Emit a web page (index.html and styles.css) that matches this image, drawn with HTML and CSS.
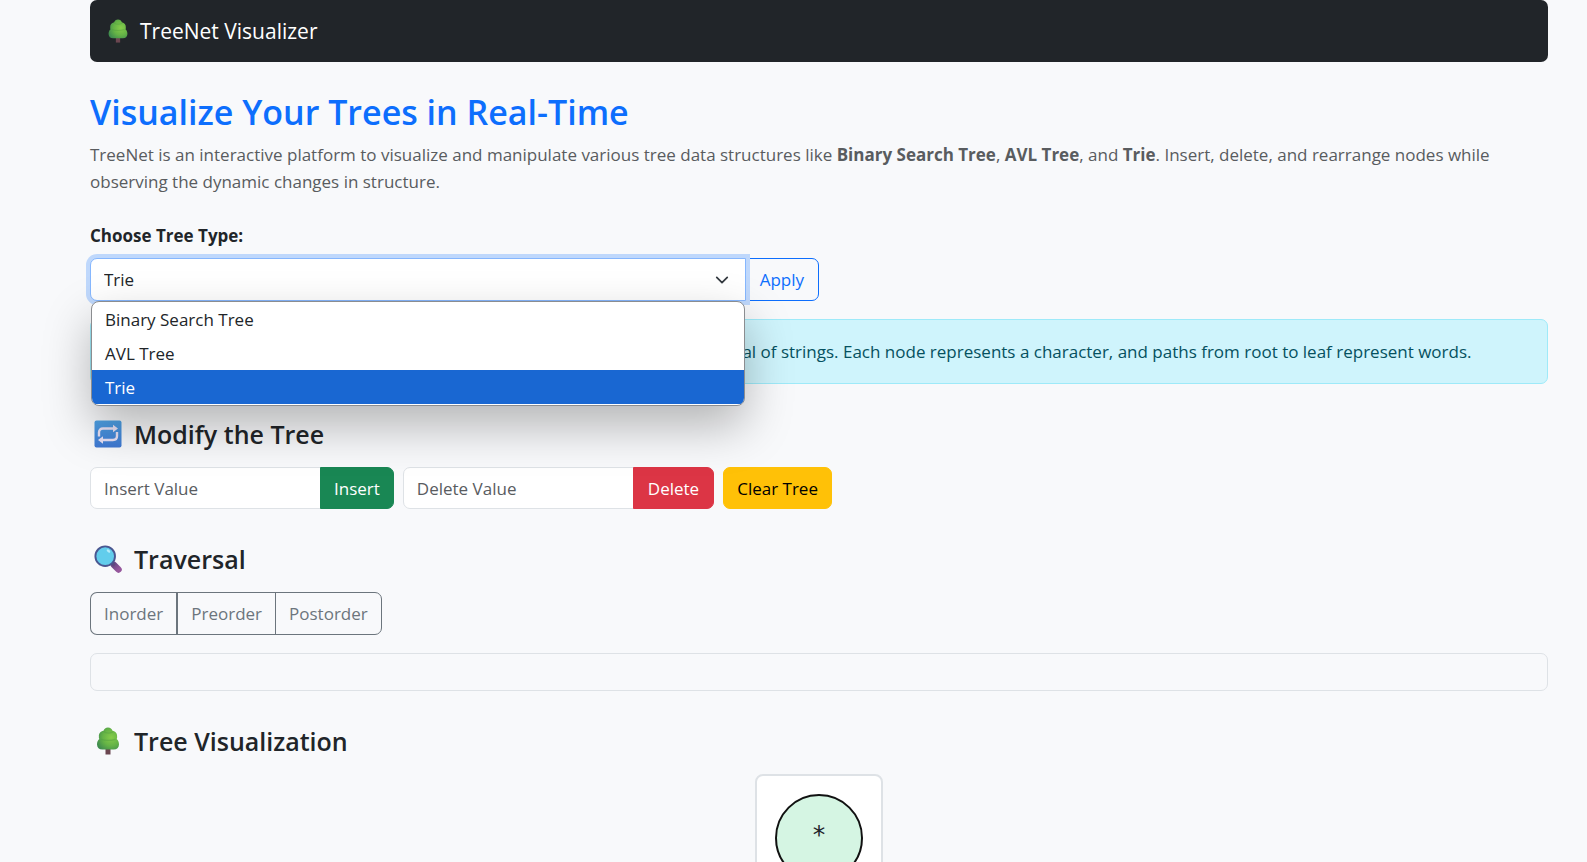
FILE: index.html
```html
<!DOCTYPE html>
<html lang="en">
<head>
<meta charset="utf-8">
<meta name="viewport" content="width=device-width, initial-scale=1">
<title>TreeNet Visualizer</title>
<link rel="stylesheet" href="styles.css">
</head>
<body>
<svg class="defs" aria-hidden="true">
  <defs>
    <radialGradient id="leaf" cx="0.65" cy="0.45" r="0.7">
      <stop offset="0" stop-color="#86cc4a"/>
      <stop offset="0.55" stop-color="#65b346"/>
      <stop offset="1" stop-color="#3f8c4e"/>
    </radialGradient>
    <linearGradient id="blue" x1="0" y1="0" x2="0" y2="1">
      <stop offset="0" stop-color="#4fa3e6"/>
      <stop offset="1" stop-color="#3f78d2"/>
    </linearGradient>
    <linearGradient id="handle" x1="0" y1="0" x2="1" y2="1">
      <stop offset="0" stop-color="#6d4a86"/>
      <stop offset="1" stop-color="#96579c"/>
    </linearGradient>
    <symbol id="tree" viewBox="0 0 28 28">
      <path d="M11.500 21h5v6.500h-5z" fill="#6b4650"/>
      <path d="M14 .5c-2.300 0-4 1.400-4.500 3.200C6.500 4.300 4.600 6.500 4.900 9.500c-.2 1 0 1.800.4 2.500C3.900 13.200 3 15 3 17.500c.2 3.200 2.100 5 5.300 5h11.400c3.200 0 5.100-1.800 5.300-5 0-2.500-.9-4.300-2.300-5.500.4-.7.6-1.500.4-2.500.3-3-1.600-5.200-4.600-5.800C18 1.900 16.300.5 14 .5z" fill="url(#leaf)"/>
      <path d="M7 12.300c4 1.500 9 1.500 14.500 0M9.500 4.500c2 1.600 6 2 9.500.5" fill="none" stroke="#4f9c41" stroke-opacity=".4" stroke-width="1.200"/>
    </symbol>
    <symbol id="repeat" viewBox="0 0 28 28">
      <rect x=".5" y=".5" width="27" height="27" rx="2" fill="url(#blue)"/>
      <path d="M5 16.500v-4C5 10 6.500 8.500 9 8.500H20M23 12v4c0 2.500-1.500 4-4 4H8" fill="none" stroke="#e9e2f5" stroke-width="2.400"/>
      <path d="M19 4.800l5 3.700-5 3.700zM9 16.300l-5 3.700 5 3.700z" fill="#e9e2f5"/>
    </symbol>
    <symbol id="lens" viewBox="0 0 28 28">
      <path d="M20 20l4.500 4.500" stroke="url(#handle)" stroke-width="6.500" stroke-linecap="round"/>
      <path d="M17.500 17.500l3 3" stroke="#5c4a80" stroke-width="3"/>
      <circle cx="11.200" cy="11.200" r="9.800" fill="#62cdec" stroke="#4a5791" stroke-width="1.900"/>
      <ellipse cx="14.500" cy="6" rx="2" ry="1.300" fill="#b5ecfa" transform="rotate(35 14.500 6)"/>
    </symbol>
  </defs>
</svg>

<div class="container">
  <nav class="navbar">
    <a class="brand" href="#"><svg class="brand-icon" aria-hidden="true"><use href="#tree"/></svg>TreeNet Visualizer</a>
  </nav>

  <header class="intro">
    <h1>Visualize Your Trees in Real-Time</h1>
    <p>TreeNet is an interactive platform to visualize and manipulate various tree data structures like <strong>Binary Search Tree</strong>, <strong>AVL Tree</strong>, and <strong>Trie</strong>. Insert, delete, and rearrange nodes while observing the dynamic changes in structure.</p>
  </header>

  <form class="chooser">
    <label for="type">Choose Tree Type:</label>
    <div class="group">
      <div class="select-wrap">
        <select id="type" class="field select">
          <option>Binary Search Tree</option>
          <option>AVL Tree</option>
          <option selected>Trie</option>
        </select>
        <svg class="chevron" viewBox="0 0 16 16" aria-hidden="true"><path d="m2 5 6 6 6-6"/></svg>
        <ul class="menu">
          <li>Binary Search Tree</li>
          <li>AVL Tree</li>
          <li class="active">Trie</li>
        </ul>
      </div>
      <button type="button" class="btn outline-primary">Apply</button>
    </div>
  </form>

  <div class="alert"><strong>Trie:</strong> A tree-like data structure which is used for efficient storage and fast retrieval of strings. Each node represents a character, and paths from root to leaf represent words.</div>

  <section>
    <h2><svg class="icon" aria-hidden="true"><use href="#repeat"/></svg>Modify the Tree</h2>
    <div class="toolbar">
      <form class="group"><input class="field" type="text" placeholder="Insert Value" aria-label="Insert Value"><button type="button" class="btn success">Insert</button></form>
      <form class="group"><input class="field" type="text" placeholder="Delete Value" aria-label="Delete Value"><button type="button" class="btn danger">Delete</button></form>
      <button type="button" class="btn warning">Clear Tree</button>
    </div>
  </section>

  <section>
    <h2><svg class="icon" aria-hidden="true"><use href="#lens"/></svg>Traversal</h2>
    <div class="orders">
      <button type="button" class="btn outline-secondary">Inorder</button>
      <button type="button" class="btn outline-secondary">Preorder</button>
      <button type="button" class="btn outline-secondary">Postorder</button>
    </div>
    <div class="output"></div>
  </section>

  <section>
    <h2><svg class="icon" aria-hidden="true"><use href="#tree"/></svg>Tree Visualization</h2>
    <div class="canvas">
      <svg width="88" height="88" viewBox="0 0 88 88">
        <circle cx="44" cy="44" r="43" fill="#d5f5e3" stroke="#111" stroke-width="2"/>
        <text x="44" y="49" text-anchor="middle">*</text>
      </svg>
    </div>
  </section>
</div>
</body>
</html>
```
FILE: styles.css
```css
*, *::before, *::after { box-sizing: border-box; }

html { overflow: hidden; }

body {
  margin: 0;
  height: 100vh;
  overflow: hidden;
  background: #f8f9fb;
  color: #212529;
  font: 17px/27px "Open Sans", "Noto Sans", sans-serif;
}

.defs { position: absolute; width: 0; height: 0; }

.container { padding: 0 39px 0 90px; }

.navbar {
  display: flex;
  align-items: center;
  height: 62px;
  margin-bottom: 27px;
  padding: 0 14px;
  background: #212529;
  border-radius: 7px;
}

.brand {
  display: flex;
  align-items: center;
  gap: 8px;
  color: #fff;
  font-size: 21px;
  text-decoration: none;
}

.brand-icon { width: 28px; height: 24px; }

h1, h2 { margin: 0; font-weight: 600; }

h1 {
  margin-bottom: 5px;
  color: #0d6efd;
  font-size: 34px;
  line-height: 47px;
}

.intro p { margin: 0 0 27px; color: #595c5f; }

label { display: block; margin-bottom: 9px; font-weight: 700; }

.group { display: flex; }

.chooser .group { width: 50%; }

.select-wrap { position: relative; flex: 1; }

.field {
  width: 231px;
  height: 42px;
  padding: 0 13px;
  color: #212529;
  background: #fff;
  border: 1px solid #dee2e6;
  border-radius: 7px 0 0 7px;
  font: inherit;
}

.field::placeholder { color: #595c5f; opacity: 1; }

.select {
  display: block;
  width: 100%;
  height: 43px;
  appearance: none;
  border-color: #86b7fe;
  box-shadow: 0 0 0 4px #bfd8fc;
}

.chevron {
  position: absolute;
  top: 15px;
  right: 17px;
  width: 14px;
  height: 14px;
  fill: none;
  stroke: #343a40;
  stroke-width: 2;
  stroke-linecap: round;
  stroke-linejoin: round;
}

.menu {
  position: absolute;
  z-index: 2;
  top: 100%;
  left: 1px;
  right: 1px;
  margin: 0;
  padding: 0 0 1px;
  overflow: hidden;
  list-style: none;
  background: #fff;
  border: 1px solid #8b8d90;
  border-radius: 8px;
  box-shadow: 0 20px 48px rgba(0, 0, 0, 0.28);
}

.menu li { padding: 1px 13px 0; line-height: 33px; }

.menu .active { color: #fff; background: #1967d2; }

.btn {
  height: 42px;
  padding: 0 13px;
  border: 1px solid;
  border-radius: 7px;
  font: inherit;
}

.group .btn { margin-left: -1px; border-radius: 0 7px 7px 0; }

.group .outline-primary {
  height: 43px;
  padding: 0 14px;
  color: #0d6efd;
  background: transparent;
  border-color: #0d6efd;
}

.success { color: #fff; background: #198754; border-color: #198754; }
.group .danger { padding: 0 14px; color: #fff; background: #dc3545; border-color: #dc3545; }
.warning { color: #000; background: #ffc107; border-color: #ffc107; }

.alert {
  margin-top: 18px;
  padding: 18px;
  color: #055160;
  background: #cff4fc;
  border: 1px solid #9eeaf9;
  border-radius: 7px;
}

h2 {
  display: flex;
  align-items: center;
  gap: 12px;
  margin: 34px 0 17px;
  padding-left: 4px;
  font-size: 25px;
  line-height: 32px;
}

.icon { width: 28px; height: 28px; }

.toolbar { display: flex; gap: 9px; }

.orders { display: flex; margin-bottom: 18px; }

.outline-secondary {
  height: 43px;
  color: #6c757d;
  background: transparent;
  border-color: #6c757d;
  border-radius: 0;
}

.outline-secondary + .outline-secondary { margin-left: -1px; }
.outline-secondary:first-child { border-radius: 7px 0 0 7px; border-right-width: 2px; }
.outline-secondary:last-child { border-radius: 0 7px 7px 0; }

.output {
  height: 38px;
  border: 1px solid #dee2e6;
  border-radius: 7px;
}

.canvas {
  width: max-content;
  margin: 0 auto;
  padding: 18px;
  background: #fff;
  border: 2px solid #dee2e6;
  border-radius: 8px;
}

.canvas svg { display: block; }

.canvas text { fill: #212529; font: 25px "DejaVu Sans", sans-serif; }
```
